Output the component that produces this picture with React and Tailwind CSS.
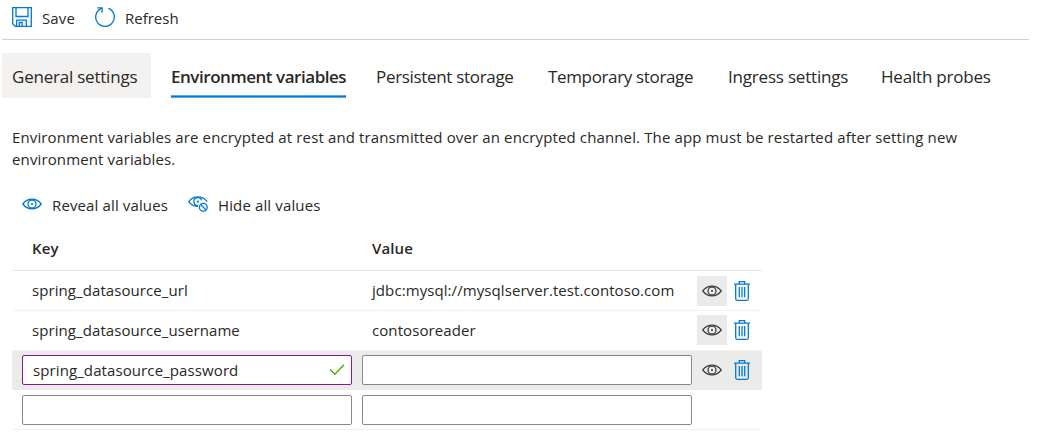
function SaveIcon() {
  return (
    <svg width="20" height="20" viewBox="0 0 20 20" fill="none" stroke="#0078d4" strokeWidth="1.3" className="shrink-0">
      <path d="M.7.7h18.6v18.6H3.2L.7 16.8z" />
      <path d="M4 .7v8.8h12V.7" />
      <path d="M4.7 19.3v-6.1h9.6v6.1M7.3 19.3v-3.8h2.9v3.8" />
    </svg>
  );
}

function RefreshIcon() {
  return (
    <svg width="20" height="20" viewBox="0 0 20 20" fill="none" stroke="#0078d4" strokeWidth="1.3" className="shrink-0">
      <path d="M13.4 1.4A9.3 9.3 0 1 1 6.6 1.4" />
      <path d="M2.2 .8h4.9v4.9" />
    </svg>
  );
}

function EyeIcon({ className }) {
  return (
    <svg width="20" height="12" viewBox="0 0 20 12" fill="none" stroke="currentColor" strokeWidth="1.3" className={className}>
      <path d="M.8 6C3 3 6.2 1.2 10 1.2S17 3 19.2 6C17 9 13.800 10.800 10 10.800S3 9 .8 6z" />
      <circle cx="10" cy="6" r="4" />
      <circle cx="10" cy="6" r="1.1" fill="currentColor" stroke="none" />
    </svg>
  );
}

function HideIcon() {
  return (
    <svg width="20" height="16" viewBox="0 0 20 16" fill="none" stroke="#0078d4" strokeWidth="1.3" className="shrink-0">
      <path d="M10 10.400C6.200 10.400 3 8.800 .8 5.600 3 2.500 6.200.8 10 .8s7 1.700 9.200 4.900" />
      <path d="M10 9.600A4 4 0 1 1 13.700 4.300" />
      <circle cx="10" cy="5.600" r="1.100" fill="#0078d4" stroke="none" />
      <circle cx="15.300" cy="11.200" r="3.900" />
      <path d="M12.600 8.500l5.400 5.400" />
    </svg>
  );
}

function TrashIcon() {
  return (
    <svg width="16" height="20" viewBox="0 0 16 20" fill="none" stroke="#0078d4" strokeWidth="1.3" className="shrink-0">
      <path d="M0 3.200h16M5.300 3.200V.7h5.400v2.500" />
      <path d="M1.700 3.200v14.600q0 1.500 1.500 1.500h9.600q1.500 0 1.500-1.500V3.200" />
      <path d="M5.300 6v10.300M8 6v10.300M10.700 6v10.300" />
    </svg>
  );
}

const tabs = [
  { label: "General settings", cls: "w-[149px] bg-[#f3f2f1] pl-[10px] tracking-[-0.22px]" },
  { label: "Environment variables", cls: "ml-[20px] w-[175px] font-semibold tracking-[-0.46px]", active: true },
  { label: "Persistent storage", cls: "ml-[30px] w-[142px] tracking-[-0.32px]" },
  { label: "Temporary storage", cls: "ml-[30px] w-[150px] tracking-[-0.35px]" },
  { label: "Ingress settings", cls: "ml-[30px] w-[124px] tracking-[-0.2px]" },
  { label: "Health probes", cls: "ml-[29px] tracking-[-0.2px]" },
];

function RowActions({ shaded = true }) {
  return (
    <div className="flex items-center">
      <button className={`flex h-[30px] w-[30px] items-center justify-center text-[#444] ${shaded ? "bg-[#ebebea]" : ""}`}>
        <EyeIcon />
      </button>
      <button className="ml-[7px]">
        <TrashIcon />
      </button>
    </div>
  );
}

export default function App() {
  return (
    <div className="h-[436px] w-[1038px] overflow-hidden bg-white font-['Open_Sans','Noto_Sans',sans-serif] text-[15px] leading-[22px] tracking-[0.13px] whitespace-nowrap text-[#292827]">
      <div className="ml-[2px] flex h-[40px] w-[1027px] items-start border-b border-[#d2d0ce] pt-[7px] pl-[10px]">
        <SaveIcon />
        <span className="ml-[10px] w-[53px]">Save</span>
        <RefreshIcon />
        <span className="ml-[10px] tracking-[0px]">Refresh</span>
      </div>

      <div className="mt-[13px] ml-[2px] flex h-[45px] text-[17px] leading-[24px]">
        {tabs.map((t) => (
          <div key={t.label} className={`flex flex-col justify-between pt-[12px] ${t.cls}`}>
            <span>{t.label}</span>
            {t.active && <div className="h-[3px] border-y border-[#5aa8e2] bg-[#0078d4]" />}
          </div>
        ))}
      </div>

      <p className="mt-[28px] ml-[12px] w-[960px] whitespace-normal">
        Environment variables are encrypted at rest and transmitted over an encrypted channel. The app must be restarted after setting new environment variables.
      </p>

      <div className="mt-[24px] ml-[22px] flex h-[22px]">
        <EyeIcon className="mt-[4px] shrink-0 text-[#0078d4]" />
        <span className="ml-[10px] w-[136px]">Reveal all values</span>
        <div className="mt-[2px]"><HideIcon /></div>
        <span className="ml-[10px]">Hide all values</span>
      </div>

      <div className="ml-[12px] w-[750px]">
        <div className="flex h-[55px] border-b border-[#e8e6e4] pt-[21px] pl-[20px] font-semibold">
          <span className="w-[340px]">Key</span>
          <span>Value</span>
        </div>
        <div className="flex h-[40px] items-start border-b border-[#f3f2f1] pt-[5px] pl-[20px] leading-[28px] tracking-[0.08px]">
          <span className="w-[340px]">spring_datasource_url</span>
          <span className="w-[325px]">jdbc:mysql://mysqlserver.test.contoso.com</span>
          <RowActions />
        </div>
        <div className="flex h-[40px] items-start border-b border-[#f3f2f1] pt-[4px] pl-[20px] leading-[30px] tracking-[0.08px]">
          <span className="w-[340px]">spring_datasource_username</span>
          <span className="w-[325px]">contosoreader</span>
          <RowActions />
        </div>
        <div className="flex h-[39px] items-start bg-[#ebebea] pt-[4px] pl-[10px] tracking-[0.1px]">
          <div className="flex h-[30px] w-[330px] items-center justify-between rounded-[2px] border border-[#881798] bg-white pr-[6px] pl-[10px]">
            <span>spring_datasource_password</span>
            <svg width="16" height="12" viewBox="0 0 16 12" fill="none" stroke="#57a300" strokeWidth="1.3">
              <path d="M1 5.500l4.800 4.800L15 .8" />
            </svg>
          </div>
          <div className="ml-[10px] h-[30px] w-[330px] rounded-[2px] border border-[#8a8886] bg-white" />
          <div className="ml-[5px]"><RowActions shaded={false} /></div>
        </div>
        <div className="flex h-[40px] border-b border-[#f3f2f1] pt-[5px] pl-[10px]">
          <div className="h-[30px] w-[330px] rounded-[2px] border border-[#8a8886] bg-white" />
          <div className="ml-[10px] h-[30px] w-[330px] rounded-[2px] border border-[#8a8886] bg-white" />
        </div>
      </div>
    </div>
  );
}
